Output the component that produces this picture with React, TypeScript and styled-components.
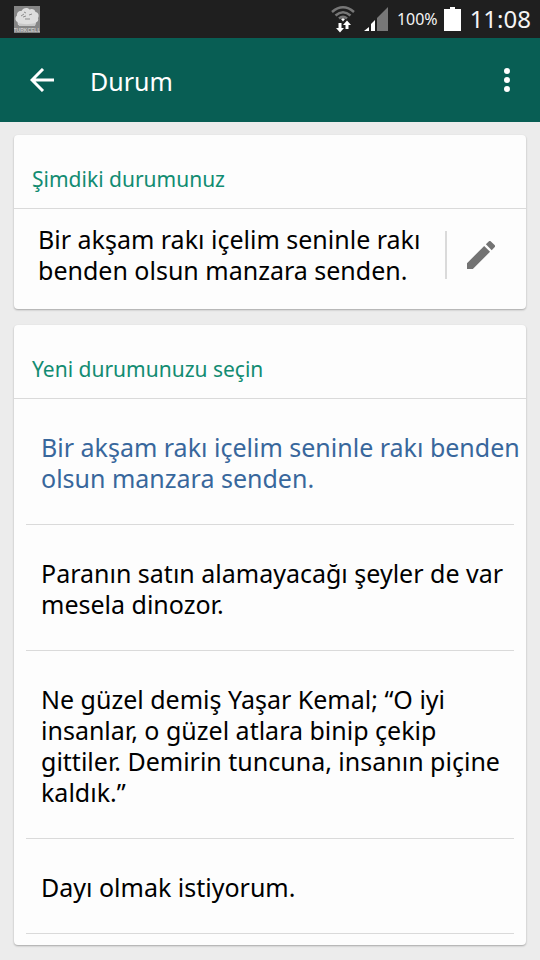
import React from "react";
import styled, { createGlobalStyle } from "styled-components";

const GlobalStyle = createGlobalStyle`
  *, *::before, *::after { box-sizing: border-box; }
  body { margin: 0; background: #ececec; color: #000; font-family: "Noto Sans", sans-serif; }
  button { font: inherit; color: inherit; border: 0; background: none; padding: 0; cursor: pointer; }
  h1, h2, p, ul { margin: 0; padding: 0; font-weight: 400; }
  svg { display: block; }
`;

const Page = styled.div`
  min-height: 100vh;
`;

const StatusBar = styled.div`
  display: flex;
  align-items: center;
  justify-content: space-between;
  height: 38px;
  padding: 0 9px 0 14px;
  background: #1f1f1f;
  color: #f4f4f4;
`;

const StatusIcons = styled.div`
  display: flex;
  align-items: center;
`;

const BatteryLevel = styled.span`
  margin: 0 6px 0 9px;
  font-size: 16px;
  line-height: 38px;
`;

const Clock = styled.time`
  margin-left: 9px;
  font-size: 24px;
  line-height: 38px;
`;

const AppBar = styled.header`
  display: flex;
  align-items: center;
  height: 84px;
  padding: 0 12px 0 21px;
  background: #085e54;
  color: #fff;
`;

const IconButton = styled.button`
  display: flex;
  align-items: center;
  justify-content: center;
  width: 42px;
  height: 48px;
`;

const Title = styled.h1`
  flex: 1;
  padding: 2px 0 0 27px;
  font-size: 25px;
  line-height: 36px;
`;

const Content = styled.main`
  display: flex;
  flex-direction: column;
  gap: 16px;
  padding: 13px 14px 15px;
`;

const Card = styled.section`
  background: #fdfdfd;
  border-radius: 4px;
  box-shadow: 0 1px 2px rgba(0, 0, 0, 0.3);
`;

const CardTitle = styled.h2`
  padding: 29px 18px 14px;
  border-bottom: 1px solid #dadada;
  color: #128c72;
  font-size: 21px;
  line-height: 30px;
`;

const CurrentStatus = styled.div`
  display: flex;
  align-items: center;
  padding: 15px 24px 23px;
`;

const CurrentText = styled.p`
  flex: 1;
  font-size: 25px;
  line-height: 31px;
`;

const EditArea = styled.div`
  display: flex;
  align-items: center;
  height: 48px;
  border-left: 2px solid #dadada;
  padding-left: 13px;
`;

const StatusList = styled.ul`
  padding-bottom: 11px;
  list-style: none;
`;

const StatusItem = styled.li`
  &::after {
    content: "";
    display: block;
    height: 1px;
    margin: 0 12px;
    background: #dadada;
  }
`;

const StatusOption = styled.button<{ $selected: boolean }>`
  display: block;
  width: 100%;
  padding: 33px 6px 30px 27px;
  color: ${({ $selected }) => ($selected ? "#38679c" : "#000")};
  font-size: 25px;
  line-height: 31px;
  text-align: left;
`;

const statuses = [
  "Bir akşam rakı içelim seninle rakı benden olsun manzara senden.",
  "Paranın satın alamayacağı şeyler de var mesela dinozor.",
  "Ne güzel demiş Yaşar Kemal; “O iyi insanlar, o güzel atlara binip çekip gittiler. Demirin tuncuna, insanın piçine kaldık.”",
  "Dayı olmak istiyorum.",
];

const CarrierIcon = () => (
  <svg width="26" height="27" viewBox="0 0 26 27" role="img" aria-label="Turkcell">
    <rect width="26" height="27" fill="#858585" />
    <path
      d="M4 19 3.500 16C1 15 .8 11 3 9.500c-.5-3 2-5 4.500-4.500C9 2 13 1 15.500 3.500 18 2 21 3.500 21.500 6c3 .2 4 4 2.500 6 .8 2-.2 4-2 4.500L21 19Z"
      fill="#dedede"
    />
    <path d="M4 17c5 1.500 12 1.500 18 0l-1 3H5Z" fill="#c8c8c8" />
    <path d="m7 10 3-2m-1 3 3-1m3-1 3-1m-7 5h5M10 6l2 1" fill="none" stroke="#8d8d8d" />
    <text x="13" y="26" textAnchor="middle" fontSize="5" fontWeight="700" fontFamily="Liberation Sans, sans-serif" fill="#ccc">
      TURKCELL
    </text>
  </svg>
);

const WifiIcon = () => (
  <svg width="24" height="28" viewBox="0 0 24 28" aria-hidden="true">
    <g fill="none" stroke="#777" strokeWidth="2.500">
      <path d="M1 7Q12-2.500 23 7" />
      <path d="M4.500 10.500Q12 4 19.500 10.500" />
      <path d="M8 13.500Q12 10 16 13.500" />
    </g>
    <path d="m10 14 2 2.500 2-2.500q-2-1.500-4 0Z" fill="#fff" />
    <path d="M7.500 18h3v5H13l-4 4.500L5 23h2.500ZM14.500 24h3v-4H20l-4-4.500-4 4.500h2.500Z" fill="#fff" />
  </svg>
);

const SignalIcon = () => (
  <svg width="33" height="24" viewBox="-9 0 33 24" aria-hidden="true">
    <path d="M13 11 24 0v24H13Z" fill="#777" />
    <path d="m0 24 5-4v4ZM7 17l4-4v11H7Z" fill="#fff" />
  </svg>
);

const BatteryIcon = () => (
  <svg width="17" height="24" viewBox="0 0 17 24" aria-hidden="true">
    <path d="M6 0h5v2h6v22H0V2h6Z" fill="#fff" />
  </svg>
);

const BackIcon = () => (
  <svg width="24" height="24" viewBox="0 0 24 24" aria-hidden="true">
    <path d="M13 1 2 12l11 11M2 12h22" fill="none" stroke="#fff" strokeWidth="3" />
  </svg>
);

const MoreIcon = () => (
  <svg width="6" height="24" viewBox="0 0 6 24" fill="#fff" aria-hidden="true">
    <circle cx="3" cy="3" r="3" />
    <circle cx="3" cy="12" r="3" />
    <circle cx="3" cy="21" r="3" />
  </svg>
);

const PencilIcon = () => (
  <svg width="28" height="28" viewBox="3 3 18 18" fill="#737373" aria-hidden="true">
    <path d="M3 17.250V21h3.750L17.810 9.940l-3.750-3.750L3 17.250ZM20.710 7.040a1 1 0 0 0 0-1.410l-2.340-2.340a1 1 0 0 0-1.410 0l-1.830 1.830 3.750 3.750 1.830-1.830Z" />
  </svg>
);

export default function App() {
  const [current, setCurrent] = React.useState(0);

  return (
    <Page>
      <GlobalStyle />
      <StatusBar>
        <CarrierIcon />
        <StatusIcons>
          <WifiIcon />
          <SignalIcon />
          <BatteryLevel>100%</BatteryLevel>
          <BatteryIcon />
          <Clock>11:08</Clock>
        </StatusIcons>
      </StatusBar>
      <AppBar>
        <IconButton type="button" aria-label="Geri">
          <BackIcon />
        </IconButton>
        <Title>Durum</Title>
        <IconButton type="button" aria-label="Diğer seçenekler">
          <MoreIcon />
        </IconButton>
      </AppBar>
      <Content>
        <Card>
          <CardTitle>Şimdiki durumunuz</CardTitle>
          <CurrentStatus>
            <CurrentText>{statuses[current]}</CurrentText>
            <EditArea>
              <IconButton type="button" aria-label="Durumu düzenle">
                <PencilIcon />
              </IconButton>
            </EditArea>
          </CurrentStatus>
        </Card>
        <Card>
          <CardTitle>Yeni durumunuzu seçin</CardTitle>
          <StatusList>
            {statuses.map((status, index) => (
              <StatusItem key={status}>
                <StatusOption
                  type="button"
                  $selected={index === current}
                  aria-pressed={index === current}
                  onClick={() => setCurrent(index)}
                >
                  {status}
                </StatusOption>
              </StatusItem>
            ))}
          </StatusList>
        </Card>
      </Content>
    </Page>
  );
}
